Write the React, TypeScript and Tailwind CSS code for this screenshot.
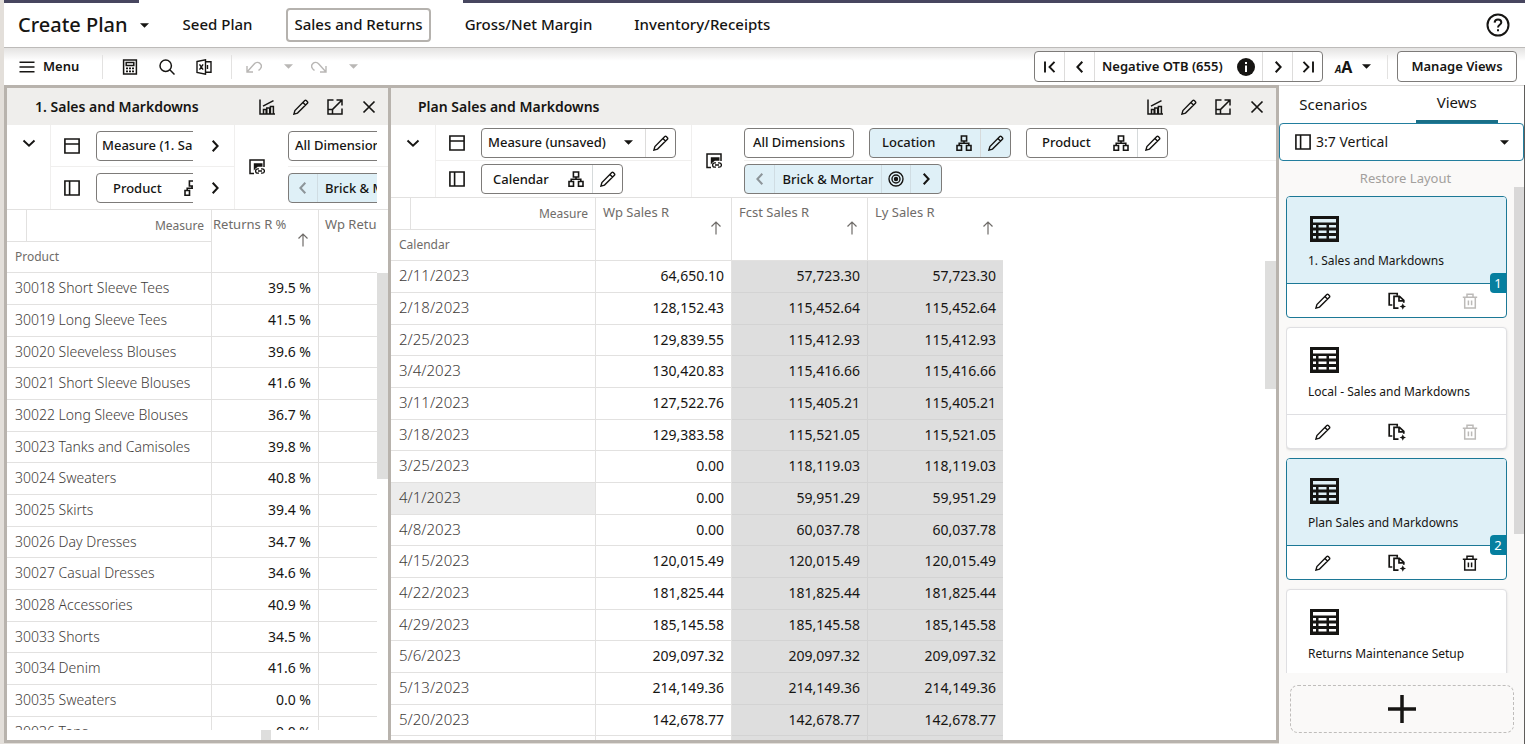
import type { ReactNode } from "react";
import { clsx } from "clsx";

type IconProps = { className?: string };

function Glyph({ children, className = "size-4", width = 1.5 }: IconProps & { children: ReactNode; width?: number }) {
  return (
    <svg viewBox="0 0 16 16" className={clsx("shrink-0", className)} fill="none" stroke="currentColor" strokeWidth={width} aria-hidden="true">
      {children}
    </svg>
  );
}

const Caret = ({ className }: IconProps) => (
  <svg viewBox="0 0 10 5" className={clsx("h-[5px] w-[9px] shrink-0", className)} fill="currentColor" aria-hidden="true">
    <path d="M0 0h10L5 5z" />
  </svg>
);
const Pencil = () => (
  <Glyph width={1.4}>
    <path d="M.9 15.1l1-3.600 9.900-9.900c.5-.5 1-.5 1.500 0l1.100 1.100c.5.5.5 1 0 1.500l-9.900 9.900zM9.900 3.500l2.600 2.600" />
  </Glyph>
);
const ChartIcon = () => (
  <Glyph>
    <path d="M1 .5V15h15M4.500 15v-4.500h2.700V15M7.800 15V9h2.900v6M11.400 15V7.500h3V15M4 7.200L14.500 1.600" />
  </Glyph>
);
const OpenIcon = () => (
  <Glyph>
    <path d="M6.500 1H1v14h14V9.500M9.500 1H15v5.500M15 1L5.600 10.400M1 10.500h4.500V15" />
  </Glyph>
);
const CloseIcon = () => (
  <Glyph width={1.7}>
    <path d="M2.500 2.500l11 11M13.500 2.500l-11 11" />
  </Glyph>
);
const Hierarchy = () => (
  <Glyph width={1.6}>
    <path d="M5.400 1h5.200v5H5.400zM1 10.500h4.500v4.700H1zM10.500 10.500H15v4.700h-4.500zM8 6v2.300M3.200 10.500V8.300h9.600v2.200" />
  </Glyph>
);
const RowsIcon = () => (
  <Glyph width={1.6}>
    <path d="M.9 1h14.200v14H.9zM.9 6h14.200" />
  </Glyph>
);
const ColumnsIcon = () => (
  <Glyph width={1.6}>
    <path d="M.9 1h14.200v14H.9zM5.600 1v14" />
  </Glyph>
);
const ChevronRight = () => (
  <Glyph width={2}>
    <path d="M5.700 2.800L10.600 8l-4.900 5.200" />
  </Glyph>
);
const ChevronLeft = () => (
  <Glyph width={2}>
    <path d="M10.300 2.800L5.400 8l4.900 5.200" />
  </Glyph>
);
const ChevronDown = () => (
  <Glyph width={1.9}>
    <path d="M2.500 5.500L8 10.700l5.500-5.200" />
  </Glyph>
);
const FirstIcon = () => (
  <Glyph width={1.9}>
    <path d="M3 2.500v11M12.500 2.800L7.500 8l5 5.200" />
  </Glyph>
);
const LastIcon = () => (
  <Glyph width={1.9}>
    <path d="M13 2.500v11M3.500 2.800l5 5.200-5 5.200" />
  </Glyph>
);
const LinkedPage = () => (
  <Glyph>
    <path d="M5 14.500H1V1h14v7" />
    <path d="M4.800 4.200h8.700v3.600H8.800L6.600 9.400 4.800 11.600z" fill="currentColor" stroke="none" />
    <path d="M10 9.800H8.800a2.200 2.200 0 000 4.400H10M12 9.800h1.200a2.200 2.200 0 010 4.400H12M9 12h4" strokeWidth={1.3} />
  </Glyph>
);
const Target = () => (
  <Glyph width={1.4}>
    <circle cx="8" cy="8" r="7" />
    <circle cx="8" cy="8" r="4" />
    <circle cx="8" cy="8" r="1.5" fill="currentColor" />
  </Glyph>
);
const SortUp = () => (
  <Glyph width={1.2}>
    <path d="M8 14.500V2M3.500 6.500L8 2l4.500 4.500" />
  </Glyph>
);
const Calculator = () => (
  <Glyph>
    <path d="M1.600 1h12.800v14H1.600zM4.200 3.600h7.600v3H4.200z" />
    <path d="M4 9.300h2M7 9.300h2M10 9.300h2M4 12.300h2M7 12.300h2M10 12.300h2" strokeWidth={1.7} />
  </Glyph>
);
const SearchIcon = () => (
  <Glyph>
    <circle cx="6.700" cy="6.700" r="5.700" />
    <path d="M10.800 10.800l4.700 4.700" />
  </Glyph>
);
const ExcelIcon = () => (
  <Glyph width={1.4}>
    <path d="M1 2.500L9.500.8v14.400L1 13.500zM9.500 2.800H15v10.400H9.500M11.500 6v4M3.500 5.300l3.600 5.400M7.100 5.300l-3.600 5.400" />
  </Glyph>
);
const UndoIcon = () => (
  <Glyph width={1.4}>
    <path d="M1 7v6h6M1 13l7.200-8c1.700-1.900 4.200-2 5.800-.6 1.600 1.500 1.600 3.900.2 5.500L12.500 11.500" />
  </Glyph>
);
const RedoIcon = () => (
  <Glyph width={1.4}>
    <path d="M15 7v6H9M15 13L7.800 5C6.100 3.100 3.600 3 2 4.400.4 5.900.4 8.300 1.800 9.900L3.500 11.500" />
  </Glyph>
);
const MenuIcon = () => (
  <Glyph>
    <path d="M.5 3.200h15M.5 8h15M.5 12.800h15" />
  </Glyph>
);
const CopyIcon = () => (
  <svg viewBox="0 0 18 18" className="size-[18px] shrink-0" fill="none" stroke="currentColor" strokeWidth={1.7} aria-hidden="true">
    <path d="M4.300 13H1.200V1.500h8v2.300" />
    <path d="M10.500 16.200H6V4.300h5.500l4.300 4v2.500M11 4.300v4.500h4.800" />
    <path d="M14.800 11.300l1 2.200 2.200 1-2.200 1-1 2.200-1-2.200-2.200-1 2.200-1z" fill="currentColor" stroke="none" />
  </svg>
);
const TrashIcon = () => (
  <Glyph width={1.5}>
    <path d="M.8 4.200h14.400M5 4V1.200h6V4M2.700 4.200V15h10.600V4.200M6.400 7.500v4.800M9.600 7.500v4.800" />
  </Glyph>
);
const TableIcon = () => (
  <svg viewBox="0 0 29 26" className="h-[26px] w-[29px] shrink-0" fill="currentColor" aria-hidden="true">
    <path
      fillRule="evenodd"
      d="M0 0h29v26H0zM3 3v3.500h23V3zM3 9v2.500h3V9zM8.500 9v2.500h8V9zM19 9v2.500h7V9zM3 14.500V17h3v-2.500zM8.500 14.500V17h8v-2.500zM19 14.500V17h7v-2.500zM3 20v2.500h3V20zM8.500 20v2.500h8V20zM19 20v2.500h7V20z"
    />
  </svg>
);

function IconButton({ label, children, className, disabled }: { label: string; children: ReactNode; className?: string; disabled?: boolean }) {
  return (
    <button type="button" aria-label={label} disabled={disabled} className={clsx("flex shrink-0 items-center justify-center", className)}>
      {children}
    </button>
  );
}

const tile = "flex h-[30px] shrink-0 items-stretch overflow-hidden rounded border border-[#7d7b79]";

function DimensionTile({ name, active, text }: { name: string; active?: boolean; text: string }) {
  return (
    <div className={clsx(tile, "w-[142px]", active ? "bg-[#dff0f7]" : "bg-white")}>
      <button type="button" className={clsx("flex flex-1 items-center justify-between pr-2", text)}>
        {name}
        <Hierarchy />
      </button>
      <IconButton label={`Edit ${name}`} className="w-[30px] border-l border-[#d6dadb]">
        <Pencil />
      </IconButton>
    </div>
  );
}

function PaneHeader({ title, indent }: { title: string; indent: string }) {
  return (
    <header className={clsx("flex h-[37px] shrink-0 items-center bg-[#efeeec] pr-[11px]", indent)}>
      <h2 className="flex-1 truncate text-sm font-semibold">{title}</h2>
      <div className="flex gap-[18px]">
        <IconButton label="Show chart"><ChartIcon /></IconButton>
        <IconButton label="Edit view"><Pencil /></IconButton>
        <IconButton label="Maximize"><OpenIcon /></IconButton>
        <IconButton label="Close"><CloseIcon /></IconButton>
      </div>
    </header>
  );
}

const products: [string, string][] = [
  ["30018 Short Sleeve Tees", "39.5 %"],
  ["30019 Long Sleeve Tees", "41.5 %"],
  ["30020 Sleeveless Blouses", "39.6 %"],
  ["30021 Short Sleeve Blouses", "41.6 %"],
  ["30022 Long Sleeve Blouses", "36.7 %"],
  ["30023 Tanks and Camisoles", "39.8 %"],
  ["30024 Sweaters", "40.8 %"],
  ["30025 Skirts", "39.4 %"],
  ["30026 Day Dresses", "34.7 %"],
  ["30027 Casual Dresses", "34.6 %"],
  ["30028 Accessories", "40.9 %"],
  ["30033 Shorts", "34.5 %"],
  ["30034 Denim", "41.6 %"],
  ["30035 Sweaters", "0.0 %"],
  ["30036 Tops", "0.0 %"],
];

const weeks: [string, string, string, string][] = [
  ["2/11/2023", "64,650.10", "57,723.30", "57,723.30"],
  ["2/18/2023", "128,152.43", "115,452.64", "115,452.64"],
  ["2/25/2023", "129,839.55", "115,412.93", "115,412.93"],
  ["3/4/2023", "130,420.83", "115,416.66", "115,416.66"],
  ["3/11/2023", "127,522.76", "115,405.21", "115,405.21"],
  ["3/18/2023", "129,383.58", "115,521.05", "115,521.05"],
  ["3/25/2023", "0.00", "118,119.03", "118,119.03"],
  ["4/1/2023", "0.00", "59,951.29", "59,951.29"],
  ["4/8/2023", "0.00", "60,037.78", "60,037.78"],
  ["4/15/2023", "120,015.49", "120,015.49", "120,015.49"],
  ["4/22/2023", "181,825.44", "181,825.44", "181,825.44"],
  ["4/29/2023", "185,145.58", "185,145.58", "185,145.58"],
  ["5/6/2023", "209,097.32", "209,097.32", "209,097.32"],
  ["5/13/2023", "214,149.36", "214,149.36", "214,149.36"],
  ["5/20/2023", "142,678.77", "142,678.77", "142,678.77"],
];

function Corner({ row }: { row: string }) {
  return (
    <th scope="col" className="border-r border-b border-[#e2e1e0] p-0 text-xs font-normal text-[#6f6c69]">
      <div className="flex h-8 border-b border-[#e2e1e0]">
        <span className="w-5 border-r border-[#e2e1e0]" />
        <span className="flex flex-1 items-center justify-end pr-[7px]">Measure</span>
      </div>
      <div className="flex h-[30px] items-center pl-2">{row}</div>
    </th>
  );
}

function MeasureHead({ name, sort, line, inset }: { name: string; sort?: boolean; line?: boolean; inset: string }) {
  return (
    <th scope="col" className={clsx("overflow-hidden border-b border-[#e2e1e0] p-0 align-top text-[13px] font-normal whitespace-nowrap text-[#6f6c69]", line && "border-r")}>
      <div className={clsx("pt-1.5 text-left leading-4", inset)}>{name}</div>
      {sort && (
        <button type="button" aria-label={`Sort by ${name}`} className="ml-auto flex pr-[7px]">
          <SortUp />
        </button>
      )}
    </th>
  );
}

function ProductPane() {
  return (
    <section className="flex w-[381px] shrink-0 flex-col overflow-hidden bg-white">
      <PaneHeader title="1. Sales and Markdowns" indent="pl-7" />
      <div className="flex h-[84px] shrink-0 text-[13px] font-medium">
        <div className="w-11 shrink-0 border-r border-[#f0efee]">
          <IconButton label="Collapse dimensions" className="h-9 w-full"><ChevronDown /></IconButton>
        </div>
        <div className="grid w-[184px] shrink-0 grid-rows-2 border-r border-[#f0efee]">
          <div className="flex items-center border-b border-[#f0efee] pl-[13px]">
            <RowsIcon />
            <div className="ml-4 w-[97px] overflow-hidden">
              <button type="button" className={clsx(tile, "w-[190px] items-center! pl-[5px]")}>Measure (1. Sales)</button>
            </div>
            <IconButton label="Next measure" className="ml-3.5"><ChevronRight /></IconButton>
          </div>
          <div className="flex items-center pl-[13px]">
            <ColumnsIcon />
            <div className="ml-4 w-[97px] overflow-hidden">
              <div className={clsx(tile, "w-[142px] items-center! gap-[22px] pl-4")}>Product <Hierarchy /></div>
            </div>
            <IconButton label="Next row dimension" className="ml-3.5"><ChevronRight /></IconButton>
          </div>
        </div>
        <div className="flex w-[53px] shrink-0 items-center pl-3.5"><LinkedPage /></div>
        <div className="grid flex-1 grid-rows-2">
          <div className="flex items-center border-b border-[#f0efee]">
            <div className="w-[89px] overflow-hidden">
              <button type="button" className={clsx(tile, "w-[120px] items-center! pl-1.5 whitespace-nowrap")}>All Dimensions</button>
            </div>
          </div>
          <div className="flex items-center">
            <div className="w-[89px] overflow-hidden">
              <div className={clsx(tile, "w-[198px] bg-[#dff0f7]")}>
                <IconButton label="Previous location" disabled className="w-[29px] border-r border-[#d0dde3] text-[#8d9599]"><ChevronLeft /></IconButton>
                <span className="flex items-center pl-[7px] whitespace-nowrap">Brick &amp; Mortar</span>
              </div>
            </div>
          </div>
        </div>
      </div>
      <div className="flex min-h-0 flex-1 border-t border-[#e2e1e0]">
        <div className="flex min-w-0 flex-1 flex-col overflow-hidden">
          <div className="min-h-0 flex-1 overflow-hidden">
            <table className="w-full table-fixed border-separate border-spacing-0 text-sm">
              <colgroup>
                <col className="w-[205px]" />
                <col className="w-[107px]" />
                <col />
              </colgroup>
              <thead>
                <tr>
                  <Corner row="Product" />
                  <MeasureHead name="Returns R %" sort line inset="pl-px" />
                  <MeasureHead name="Wp Returns R" inset="pl-1.5" />
                </tr>
              </thead>
              <tbody>
                {products.map(([name, value]) => (
                  <tr key={name} className="h-8 nth-[3n]:h-[31px]">
                    <th scope="row" className="border-r border-b border-[#e2e1e0] pt-0 pb-px pl-2 text-left font-light whitespace-nowrap text-[#3f3c3a]">{name}</th>
                    <td className="border-r border-b border-[#e2e1e0] pt-0 pr-[7px] pb-px text-right">{value}</td>
                    <td className="border-b border-[#e2e1e0] p-0" />
                  </tr>
                ))}
              </tbody>
            </table>
          </div>
          <div className="flex h-2.5 shrink-0 pl-[254px]"><span className="w-2.5 bg-[#dededd]" /></div>
        </div>
        <div className="w-[11px] shrink-0 pt-[63px]"><div className="h-[206px] bg-[#dededd]" /></div>
      </div>
    </section>
  );
}

function CalendarPane() {
  return (
    <section className="flex min-w-0 flex-1 flex-col overflow-hidden bg-white">
      <PaneHeader title="Plan Sales and Markdowns" indent="pl-[27px]" />
      <div className="flex h-[72px] shrink-0 text-[13px] font-medium">
        <div className="w-[45px] shrink-0 border-r border-[#f0efee]">
          <IconButton label="Collapse dimensions" className="h-9 w-full"><ChevronDown /></IconButton>
        </div>
        <div className="grid w-[256px] shrink-0 grid-rows-2 border-r border-[#f0efee]">
          <div className="flex items-center border-b border-[#f0efee] pl-[13px]">
            <RowsIcon />
            <div className={clsx(tile, "ml-4 w-[195px] bg-white")}>
              <label className="relative flex flex-1 items-center">
                <select aria-label="Measure profile" className="h-full w-full appearance-none pl-1.5 font-medium outline-none">
                  <option>Measure (unsaved)</option>
                </select>
                <Caret className="pointer-events-none absolute right-3" />
              </label>
              <IconButton label="Edit measure profile" className="w-[30px] border-l border-[#dddcdb]"><Pencil /></IconButton>
            </div>
          </div>
          <div className="flex items-center pl-[13px]">
            <ColumnsIcon />
            <div className="ml-4"><DimensionTile name="Calendar" text="pl-[11px]" /></div>
          </div>
        </div>
        <div className="flex w-[52px] shrink-0 items-center pl-3.5"><LinkedPage /></div>
        <div className="grid flex-1 grid-rows-2">
          <div className="flex items-center gap-[15px] border-b border-[#f0efee]">
            <button type="button" className={clsx(tile, "w-[110px] items-center! justify-center whitespace-nowrap")}>All Dimensions</button>
            <DimensionTile name="Location" active text="pl-3" />
            <DimensionTile name="Product" text="pl-[15px]" />
          </div>
          <div className="flex items-center">
            <div className={clsx(tile, "w-[198px] bg-[#dff0f7]")}>
              <IconButton label="Previous location" disabled className="w-[30px] border-r border-[#d0dde3] text-[#8d9599]"><ChevronLeft /></IconButton>
              <span className="flex flex-1 items-center justify-center whitespace-nowrap">Brick &amp; Mortar</span>
              <IconButton label="Find location" className="w-[30px] border-x border-[#d0dde3]"><Target /></IconButton>
              <IconButton label="Next location" className="w-[30px]"><ChevronRight /></IconButton>
            </div>
          </div>
        </div>
      </div>
      <div className="flex min-h-0 flex-1 justify-between border-t border-[#e2e1e0]">
        <div className="overflow-hidden">
          <table className="w-[612px] table-fixed border-separate border-spacing-0 text-sm">
            <colgroup>
              <col className="w-[205px]" />
              <col className="w-[136px]" />
              <col className="w-[136px]" />
              <col />
            </colgroup>
            <thead>
              <tr>
                <Corner row="Calendar" />
                <MeasureHead name="Wp Sales R" sort line inset="pl-[7px]" />
                <MeasureHead name="Fcst Sales R" sort line inset="pl-[7px]" />
                <MeasureHead name="Ly Sales R" sort inset="pl-[7px]" />
              </tr>
            </thead>
            <tbody>
              {weeks.map(([week, wp, fcst, ly]) => (
                <tr key={week} className="h-8 nth-[3n]:h-[31px]">
                  <th scope="row" className={clsx("border-r border-b border-[#e2e1e0] pt-0 pb-px pl-2 text-left text-[15px] font-light text-[#3f3c3a]", week === "4/1/2023" && "bg-[#ececec]")}>{week}</th>
                  <td className="border-r border-b border-[#e2e1e0] pt-0 pr-[7px] pb-px text-right">{wp}</td>
                  <td className="border-r border-b border-[#d3d3d3] bg-[#dedede] pt-0 pr-[7px] pb-px text-right">{fcst}</td>
                  <td className="border-b border-[#d3d3d3] bg-[#dedede] pt-0 pr-[7px] pb-px text-right">{ly}</td>
                </tr>
              ))}
              <tr className="h-8">
                <th className="border-r border-[#e2e1e0]" />
                <td className="border-r border-[#e2e1e0]" />
                <td className="border-r border-[#d3d3d3] bg-[#dedede]" />
                <td className="bg-[#dedede]" />
              </tr>
            </tbody>
          </table>
        </div>
        <div className="w-[11px] shrink-0 pt-[63px]"><div className="h-[128px] bg-[#dededd]" /></div>
      </div>
    </section>
  );
}

const views = [
  { name: "1. Sales and Markdowns", badge: "1", locked: true },
  { name: "Local - Sales and Markdowns", badge: "", locked: true },
  { name: "Plan Sales and Markdowns", badge: "2", locked: false },
  { name: "Returns Maintenance Setup", badge: "", locked: false },
];

function Sidebar() {
  return (
    <aside className="flex w-[246px] shrink-0 flex-col border-r border-[#5f5d5b] bg-[#faf9f8]">
      <div role="tablist" className="grid h-[38px] shrink-0 grid-cols-2 border-t border-[#d9d8d7] bg-white text-[15px]">
        <button type="button" role="tab" aria-selected="false" className="pr-3.5">Scenarios</button>
        <button type="button" role="tab" aria-selected="true" className="mr-[26px] ml-3.5 border-b-3 border-[#1a6f87]">Views</button>
      </div>
      <label className="relative flex h-[38px] shrink-0 items-center rounded border border-[#227e9e] bg-white">
        <span className="pointer-events-none absolute left-[15px]"><ColumnsIcon /></span>
        <select aria-label="Layout" className="size-full appearance-none pl-9 text-sm outline-none">
          <option>3:7 Vertical</option>
        </select>
        <Caret className="pointer-events-none absolute right-3.5" />
      </label>
      <div className="flex min-h-0 flex-1">
        <div className="flex min-w-0 flex-1 flex-col pl-[7px]">
          <button type="button" disabled className="h-[35px] shrink-0 pl-[11px] text-[13px] text-[#a3a09d]">Restore Layout</button>
          <ul className="flex min-h-0 flex-1 flex-col gap-[9px] overflow-hidden pr-[7px]">
            {views.map(({ name, badge, locked }) => (
              <li key={name} className={clsx("relative shrink-0 overflow-hidden rounded border bg-white", badge ? "border-[#1c7896]" : "border-[#dfdfe2] shadow-sm")}>
                <button type="button" className={clsx("flex h-[87px] w-full flex-col gap-[11px] border-b pt-[19px] pl-[21px] text-left text-xs", badge ? "border-[#1c7896] bg-[#dff0f7]" : "border-[#dfdfe2]")}>
                  <span className="pl-0.5"><TableIcon /></span>
                  {name}
                </button>
                {badge && <span className="absolute top-[76px] right-0 flex h-5 w-4 items-center justify-center rounded-l bg-[#067f9f] text-[13px] text-white">{badge}</span>}
                <div className="flex h-[33px] items-center justify-between px-7">
                  <IconButton label={`Edit ${name}`}><Pencil /></IconButton>
                  <IconButton label={`Copy ${name}`}><CopyIcon /></IconButton>
                  <IconButton label={`Delete ${name}`} disabled={locked} className={locked ? "text-[#bcbab8]" : ""}><TrashIcon /></IconButton>
                </div>
              </li>
            ))}
          </ul>
        </div>
        <div className="w-2.5 shrink-0 pt-[26px]"><div className="h-[347px] bg-[#d9d8d8]" /></div>
      </div>
      <button type="button" aria-label="Add view" className="mt-3 mr-2.5 mb-[11px] ml-[11px] flex h-12 shrink-0 items-center justify-center rounded-lg border border-dashed border-[#bfbdbb]">
        <svg viewBox="0 0 28 28" className="size-7" stroke="currentColor" strokeWidth={3.5} aria-hidden="true"><path d="M14 0v28M0 14h28" /></svg>
      </button>
    </aside>
  );
}

const tabs = ["Seed Plan", "Sales and Returns", "Gross/Net Margin", "Inventory/Receipts"];

function Toolbar() {
  return (
    <div className="flex h-[38px] shrink-0 items-center border-t border-[#bdbbb9] bg-gradient-to-b from-[#e4e3e2] via-white via-35% to-white pr-2 text-[13px] font-semibold">
      <button type="button" className="flex h-full w-[98px] items-center gap-2 pl-[15px]"><MenuIcon />Menu</button>
      <div className="flex h-6 items-center gap-[21px] border-l border-[#e3e2e1] px-[19px]">
        <IconButton label="Calculate"><Calculator /></IconButton>
        <IconButton label="Search"><SearchIcon /></IconButton>
        <IconButton label="Export to Excel"><ExcelIcon /></IconButton>
      </div>
      <div className="flex h-6 flex-1 items-center border-l border-[#e3e2e1] pl-3.5 text-[#b9b7b5]">
        <IconButton label="Undo" disabled><UndoIcon /></IconButton>
        <IconButton label="Undo history" disabled className="ml-[22px]"><Caret /></IconButton>
        <IconButton label="Redo" disabled className="ml-[18px]"><RedoIcon /></IconButton>
        <IconButton label="Redo history" disabled className="ml-[22px]"><Caret /></IconButton>
      </div>
      <div className="flex h-[31px] w-[289px] items-stretch rounded border border-[#7d7b79] bg-white">
        <IconButton label="First alert" className="w-[29px]"><FirstIcon /></IconButton>
        <IconButton label="Previous alert" className="w-[31px] border-x border-[#dddcdb]"><ChevronLeft /></IconButton>
        <span className="flex flex-1 items-center justify-between px-[7px] whitespace-nowrap">
          Negative OTB (655)
          <svg viewBox="0 0 18 18" className="size-[18px]" aria-hidden="true">
            <circle cx="9" cy="9" r="9" fill="#161513" />
            <path d="M8 7.500h2V14H8zM8 4h2v2H8z" fill="#fff" />
          </svg>
        </span>
        <IconButton label="Next alert" className="w-[31px] border-x border-[#dddcdb]"><ChevronRight /></IconButton>
        <IconButton label="Last alert" className="w-[29px]"><LastIcon /></IconButton>
      </div>
      <button type="button" aria-label="Font size" className="flex h-6 w-[65px] items-center gap-2.5 border-r border-[#e3e2e1] pl-3 font-bold">
        <span aria-hidden="true" className="flex items-baseline leading-none"><span className="text-[10px] italic">A</span><span className="text-base">A</span></span>
        <Caret />
      </button>
      <button type="button" className="ml-[9px] h-[31px] w-[120px] rounded border border-[#7d7b79] bg-white">Manage Views</button>
    </div>
  );
}

export default function App() {
  return (
    <div className="flex h-screen flex-col bg-[#e3dfda] pl-1 font-['Noto_Sans','Open_Sans',sans-serif] text-sm text-[#161513]">
      <div className="flex h-[3px] shrink-0 bg-[#47465f]"><span className="ml-[135px] w-[324px] bg-white" /></div>
      <header className="flex h-11 shrink-0 items-center bg-white pr-[15px] pl-3.5">
        <button type="button" className="flex items-center gap-3 text-xl font-medium">Create Plan <Caret /></button>
        <nav className="ml-[26px] flex flex-1 gap-[26px] text-[15px] font-medium">
          {tabs.map((tab, i) => (
            <a key={tab} href="#" className={clsx("flex h-[34px] items-center rounded border-2 px-1.5", i === 1 ? "border-[#b5b2ae]" : "border-transparent")}>{tab}</a>
          ))}
        </nav>
        <IconButton label="Help">
          <svg viewBox="0 0 24 24" className="size-6" fill="none" stroke="currentColor" strokeWidth={2} aria-hidden="true">
            <circle cx="12" cy="12" r="10.500" />
            <path d="M8.600 9.600c.2-2 1.500-3 3.400-3s3.300 1.100 3.300 2.800c0 2.400-3.300 2.400-3.300 5.100M12 16.300v2" />
          </svg>
        </IconButton>
      </header>
      <Toolbar />
      <main className="flex min-h-0 flex-1">
        <div className="mb-px flex min-w-0 flex-1 gap-[3px] border-[3px] border-[#b8b3ad] bg-[#b8b3ad]">
          <ProductPane />
          <CalendarPane />
        </div>
        <Sidebar />
      </main>
    </div>
  );
}
